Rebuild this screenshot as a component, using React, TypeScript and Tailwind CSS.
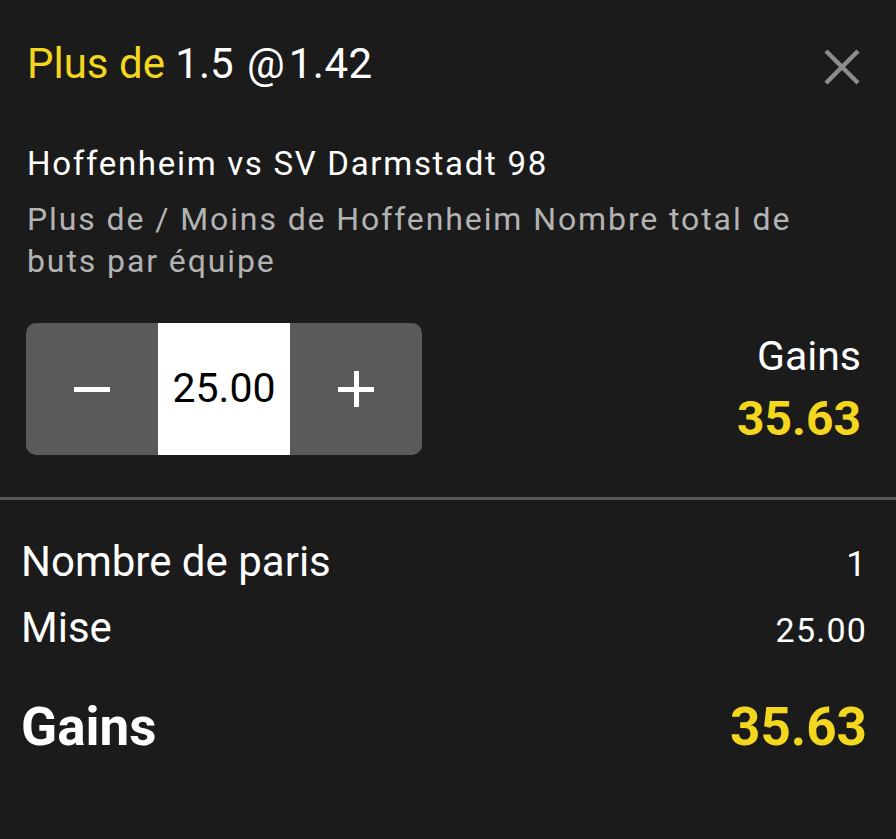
import React from "react";

const FONT = "font-['Roboto','Liberation_Sans',sans-serif]";

export default function App() {
  const stake = "25.00";
  const gains = "35.63";

  return (
    <div className={`min-h-screen w-full bg-[#1b1b1b] text-white ${FONT}`}>
      {/* Sélection */}
      <div className="px-[27px] pt-[38px]">
        <div className="flex items-center justify-between">
          <h1 className="text-[42px] leading-[52px]">
            <span className="text-[#f3d61e]">Plus de</span> 1.5 <span className="ml-[3px]">@</span>
            <span className="ml-[4px] tracking-[0.5px]">1.42</span>
          </h1>
          <button className="mr-[9px] mt-[6px] flex h-[36px] w-[36px] items-center justify-center text-[#8c8c8c]" aria-label="Fermer">
            <svg viewBox="0 0 36 36" className="h-[36px] w-[36px]" aria-hidden>
              <path d="M2 2 L34 34 M34 2 L2 34" stroke="currentColor" strokeWidth="4.5" />
            </svg>
          </button>
        </div>

        <p className="mt-[54px] text-[33px] leading-[40px] tracking-[1.7px]">Hoffenheim vs SV Darmstadt 98</p>
        <p className="mt-[14px] max-w-[800px] text-[32px] leading-[42px] tracking-[1.9px] text-[#b3b3b3]">
          Plus de / Moins de Hoffenheim Nombre total de buts par équipe
        </p>

        {/* Mise + gains */}
        <div className="mt-[41px] flex items-start justify-between">
          <div className="-ml-px flex h-[132px] w-[396px] overflow-hidden rounded-[10px] bg-[#5a5a5a]">
            <button className="flex w-[132px] items-center justify-center" aria-label="Moins">
              <span className="block h-[5px] w-[36px] bg-white" />
            </button>
            <div className="flex w-[132px] items-center justify-center bg-white text-[41px] text-black">
              {stake}
            </div>
            <button className="relative flex w-[132px] items-center justify-center" aria-label="Plus">
              <span className="block h-[5px] w-[36px] bg-white" />
              <span className="absolute h-[36px] w-[5px] bg-white" />
            </button>
          </div>
          <div className="mr-[8px] mt-[9px] text-right">
            <p className="text-[41px] leading-[48px]">Gains</p>
            <p className="mt-[13px] text-[48px] font-bold leading-[52px] text-[#f3d61e]">{gains}</p>
          </div>
        </div>
      </div>

      <div className="mt-[42px] h-[3px] w-full bg-[#585858]" />

      {/* Récapitulatif */}
      <div className="px-[21px] pt-[36px]">
        <div className="flex h-[52px] items-baseline justify-between">
          <span className="text-[42px] leading-[52px]">Nombre de paris</span>
          <span className="mr-[9px] text-[35px] leading-[44px]">1</span>
        </div>
        <div className="mt-[14px] flex h-[52px] items-baseline justify-between">
          <span className="text-[42px] leading-[52px]">Mise</span>
          <span className="mr-[8px] text-[34px] leading-[44px] tracking-[1.2px]">{stake}</span>
        </div>
        <div className="mt-[43px] flex items-baseline justify-between">
          <span className="text-[53px] font-bold leading-[60px]">Gains</span>
          <span className="mr-[8px] text-[53px] font-bold leading-[60px] text-[#f3d61e]">{gains}</span>
        </div>
      </div>
    </div>
  );
}
